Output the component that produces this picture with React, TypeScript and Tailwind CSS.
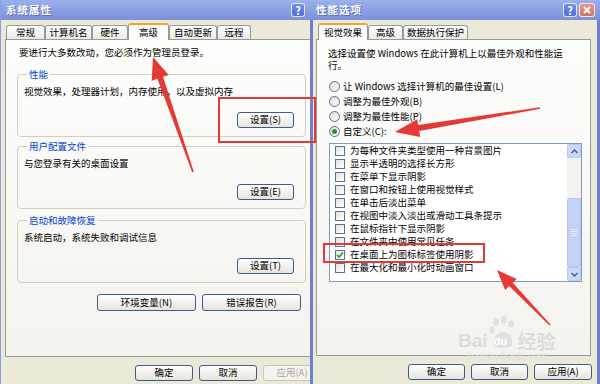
import React from 'react'

function Btn({ label, w, disabled }: { label: string; w: string; disabled?: boolean }) {
  return (
    <div
      className={`${w} h-[16px] shrink-0 flex items-center justify-center rounded-[3px] border text-[9.5px] leading-none ${
        disabled
          ? 'border-[#c9c6b6] bg-[#f4f3ee] text-[#aca899]'
          : 'border-[#3d5b8c] bg-linear-to-b from-white to-[#e6e4da] text-black'
      }`}
    >
      {label}
    </div>
  )
}

function Tab({ label, w, active }: { label: string; w: string; active?: boolean }) {
  if (active) {
    return (
      <div className={`${w} h-[17px] shrink-0 flex items-center justify-center rounded-t-[3px] border border-b-0 border-[#919b9c] border-t-[2px] border-t-[#f2a33a] bg-[#fdfdfc] text-[9.5px]`}>
        {label}
      </div>
    )
  }
  return (
    <div className={`${w} h-[14px] mb-px shrink-0 flex items-center justify-center rounded-t-[3px] border border-b-0 border-[#919b9c] bg-linear-to-b from-white to-[#eae9e3] text-[9.5px]`}>
      {label}
    </div>
  )
}

function Group({ title, text, btn, className = '' }: { title: string; text: string; btn: string; className?: string }) {
  return (
    <fieldset className={`border border-[#d0d0bf] rounded-[4px] pl-[6px] pr-[11px] pb-[8px] ${className}`}>
      <legend className="ml-[3px] px-[2px] text-[9.5px] leading-[12px] text-[#0046d5]">{title}</legend>
      <div className="mt-[5px] text-[9.5px] leading-[12px]">{text}</div>
      <div className="mt-[15px] flex justify-end">
        <Btn label={btn} w="w-[57px]" />
      </div>
    </fieldset>
  )
}

function HelpBtn() {
  return (
    <div className="w-[14px] h-[14px] rounded-[3px] border border-white/80 bg-linear-to-b from-[#6f8fe8] to-[#4d6fd8] flex items-center justify-center text-white text-[11px] font-bold leading-none">
      ?
    </div>
  )
}

function Radio({ label, checked }: { label: string; checked?: boolean }) {
  return (
    <div className="h-[15px] flex items-center gap-[3px] pl-[1px] text-[9.5px]">
      <span className="w-[11px] h-[11px] shrink-0 rounded-full border border-[#5a7196] bg-linear-to-br from-[#dddbd2] to-white flex items-center justify-center">
        {checked && <span className="w-[5px] h-[5px] rounded-full bg-[#2f8f2f]" />}
      </span>
      <span>{label}</span>
    </div>
  )
}

function CheckRow({ label, checked }: { label: string; checked?: boolean }) {
  return (
    <div className="h-[13px] flex items-center gap-[5px] pl-[5px] whitespace-nowrap text-[9.5px]">
      <span className="w-[10px] h-[10px] shrink-0 border border-[#5a7196] bg-linear-to-br from-[#e3e2da] to-white flex items-center justify-center">
        {checked && (
          <svg width="8" height="8" viewBox="0 0 8 8">
            <path d="M1 4 L3 6 L7 1.5" fill="none" stroke="#21a121" strokeWidth="1.6" />
          </svg>
        )}
      </span>
      <span>{label}</span>
    </div>
  )
}

const items = [
  '为每种文件夹类型使用一种背景图片',
  '显示半透明的选择长方形',
  '在菜单下显示阴影',
  '在窗口和按钮上使用视觉样式',
  '在单击后淡出菜单',
  '在视图中淡入淡出或滑动工具条提示',
  '在鼠标指针下显示阴影',
  '在文件夹中使用常见任务',
]

function LeftWindow() {
  return (
    <div className="w-[310px] h-[384px] shrink-0 overflow-hidden flex flex-col bg-[#ece9d8] border-l border-[#8a9ddf]">
      <div className="h-[20px] shrink-0 flex items-center justify-between pl-[5px] pr-[5px] bg-linear-to-b from-[#9cb0ea] to-[#7b90db]">
        <span className="text-white text-[10.5px] font-bold tracking-[1px] [text-shadow:1px_1px_0_#5a6fb8]">系统属性</span>
        <HelpBtn />
      </div>
      <div className="pl-[4px] pt-[3px]">
        <div className="relative z-10 -mb-px h-[17px] flex items-end ml-[1px]">
          <Tab label="常规" w="w-[39px]" />
          <Tab label="计算机名" w="w-[47px]" />
          <Tab label="硬件" w="w-[36px]" />
          <Tab label="高级" w="w-[41px]" active />
          <Tab label="自动更新" w="w-[48px]" />
          <Tab label="远程" w="w-[34px]" />
        </div>
        <div className="w-[320px] h-[318px] border border-[#919b9c] bg-linear-to-b from-[#fdfdfc] to-[#f4f3ee] pl-[11px] pr-[18px] pt-[6px]">
          <div className="pl-[2px] text-[9.5px] leading-[12px]">要进行大多数改动，您必须作为管理员登录。</div>
          <Group className="mt-[10px]" title="性能" text="视觉效果，处理器计划，内存使用，以及虚拟内存" btn="设置(S)" />
          <Group className="mt-[3px]" title="用户配置文件" text="与您登录有关的桌面设置" btn="设置(E)" />
          <Group className="mt-[5px]" title="启动和故障恢复" text="系统启动，系统失败和调试信息" btn="设置(T)" />
          <div className="mt-[11px] flex justify-end gap-[6px] pr-[5px]">
            <div className="w-[99px] h-[17px] flex items-center justify-center rounded-[3px] border border-[#3d5b8c] bg-linear-to-b from-white to-[#e6e4da] text-[9.5px]">环境变量(N)</div>
            <div className="w-[99px] h-[17px] flex items-center justify-center rounded-[3px] border border-[#3d5b8c] bg-linear-to-b from-white to-[#e6e4da] text-[9.5px]">错误报告(R)</div>
          </div>
        </div>
      </div>
      <div className="mt-[8px] flex gap-[6px] pl-[134px]">
        <Btn label="确定" w="w-[58px]" />
        <Btn label="取消" w="w-[58px]" />
        <Btn label="应用(A)" w="w-[58px]" disabled />
      </div>
    </div>
  )
}

function RightWindow() {
  return (
    <div className="w-[290px] h-[384px] shrink-0 flex flex-col">
      <div className="h-[20px] shrink-0 flex items-center justify-between pl-[6px] pr-[5px] bg-linear-to-b from-[#9cb0ea] to-[#7b90db]">
        <span className="text-white text-[10.5px] font-bold tracking-[1px] [text-shadow:1px_1px_0_#5a6fb8]">性能选项</span>
        <div className="flex gap-[2px]">
          <HelpBtn />
          <div className="w-[16px] h-[14px] rounded-[3px] border border-white/80 bg-linear-to-b from-[#e59a88] to-[#d1735f] flex items-center justify-center">
            <svg width="8" height="8" viewBox="0 0 8 8">
              <path d="M1 1 L7 7 M7 1 L1 7" stroke="white" strokeWidth="1.8" />
            </svg>
          </div>
        </div>
      </div>
      <div className="flex-1 flex flex-col bg-[#ece9d8] border-x-[3px] border-[#6b80d5] px-[3px] pt-[3px]">
        <div className="relative z-10 -mb-px h-[17px] flex items-end ml-[2px]">
          <Tab label="视觉效果" w="w-[50px]" active />
          <Tab label="高级" w="w-[35px]" />
          <Tab label="数据执行保护" w="w-[65px]" />
        </div>
        <div className="w-[275px] h-[317px] border border-[#919b9c] bg-linear-to-b from-[#fdfdfc] to-[#f4f3ee] pl-[11px] pt-[7px]">
          <div className="h-[12px] text-[9.5px] leading-[12px] whitespace-nowrap">选择设置使 Windows 在此计算机上以最佳外观和性能运</div>
          <div className="h-[12px] text-[9.5px] leading-[12px]">行。</div>
          <div className="mt-[8px]">
            <Radio label="让 Windows 选择计算机的最佳设置(L)" />
            <Radio label="调整为最佳外观(B)" />
            <Radio label="调整为最佳性能(P)" />
            <Radio label="自定义(C):" checked />
          </div>
          <div className="mt-[4px] ml-px w-[253px] h-[139px] border border-[#7f9db9] bg-white flex">
            <div className="flex-1 overflow-hidden">
              {items.map((t) => (
                <CheckRow key={t} label={t} />
              ))}
              <CheckRow label="在桌面上为图标标签使用阴影" checked />
              <CheckRow label="在最大化和最小化时动画窗口" />
            </div>
            <div className="w-[14px] shrink-0 flex flex-col bg-[#f3f2ee]">
              <div className="h-[14px] rounded-[2px] bg-[#c9d7fb] border border-[#b7c8f4] flex items-center justify-center">
                <svg width="7" height="5" viewBox="0 0 7 5">
                  <path d="M0.5 4 L3.5 1 L6.5 4" fill="none" stroke="#4d6185" strokeWidth="1.5" />
                </svg>
              </div>
              <div className="flex-1 flex flex-col pt-[40px]">
                <div className="flex-1 rounded-[2px] bg-[#c4d2f8] border border-[#b4c5f2] flex flex-col items-center justify-center gap-[1px]">
                  <span className="w-[6px] h-px bg-[#e4ebfd]" />
                  <span className="w-[6px] h-px bg-[#e4ebfd]" />
                  <span className="w-[6px] h-px bg-[#e4ebfd]" />
                  <span className="w-[6px] h-px bg-[#e4ebfd]" />
                </div>
              </div>
              <div className="h-[14px] rounded-[2px] bg-[#c9d7fb] border border-[#b7c8f4] flex items-center justify-center">
                <svg width="7" height="5" viewBox="0 0 7 5">
                  <path d="M0.5 1 L3.5 4 L6.5 1" fill="none" stroke="#4d6185" strokeWidth="1.5" />
                </svg>
              </div>
            </div>
          </div>
        </div>
        <div className="mt-[8px] flex justify-end gap-[6px] pr-[2px]">
          <Btn label="确定" w="w-[57px]" />
          <Btn label="取消" w="w-[57px]" />
          <Btn label="应用(A)" w="w-[58px]" />
        </div>
      </div>
    </div>
  )
}

export default function App() {
  return (
    <div className="relative w-[600px] h-[384px] overflow-hidden flex bg-[#ece9d8] text-black font-['Noto_Sans_CJK_SC','Liberation_Sans',sans-serif]">
      <LeftWindow />
      <RightWindow />

      {/* red annotation boxes */}
      <div className="absolute left-[218px] top-[97px] w-[98px] h-[46px] border-2 border-[#e53935]" />
      <div className="absolute left-[323px] top-[243px] w-[162px] h-[20px] border-2 border-[#e53935]" />

      {/* red arrows */}
      <svg className="absolute inset-0 pointer-events-none" width="600" height="384" viewBox="0 0 600 384">
        <polygon
          fill="#e53935"
          points="153,57 168.7,74.9 163,76.8 193.8,171.7 192.2,172.3 157.4,78.8 151.7,80.8"
        />
        <polygon
          fill="#e53935"
          points="395,132 417.2,119.2 418.2,125.1 539.9,107.2 540.1,108.8 419.2,131.1 420.2,137"
        />
        <polygon
          fill="#e53935"
          points="497,270 516.6,278.9 512.7,282.7 550.5,324.5 549.5,325.5 509.1,286.1 505.1,290"
        />
      </svg>

      {/* watermark */}
      <div className="absolute left-[458px] top-[316px] pointer-events-none flex flex-col items-center">
        <div className="flex items-end">
          <span className="text-[19px] font-bold leading-none text-[#dcdcdc] font-['Liberation_Sans',sans-serif]">Bai</span>
          <span className="relative w-[30px] h-[34px]">
            <svg className="absolute left-0 top-0" width="30" height="34" viewBox="0 0 30 34">
              <ellipse cx="8" cy="6" rx="3" ry="4" fill="#e0e0e0" />
              <ellipse cx="16" cy="4" rx="3" ry="4" fill="#e0e0e0" />
              <ellipse cx="23" cy="8" rx="3" ry="3.5" fill="#e0e0e0" />
              <ellipse cx="4" cy="14" rx="2.5" ry="3.5" fill="#e0e0e0" />
              <path d="M6 30 Q4 18 15 16 Q26 18 24 30 Q15 34 6 30 Z" fill="#e0e0e0" />
            </svg>
            <span className="absolute left-[6px] bottom-[3px] text-[11px] font-bold leading-none text-white font-['Liberation_Sans',sans-serif]">du</span>
          </span>
          <span className="text-[19px] font-bold leading-none text-[#dcdcdc]">经验</span>
        </div>
        <span className="mt-[2px] text-[10px] leading-none text-[#e2e2e2] font-['Liberation_Sans',sans-serif]">jingyan.baidu.com</span>
      </div>
    </div>
  )
}
